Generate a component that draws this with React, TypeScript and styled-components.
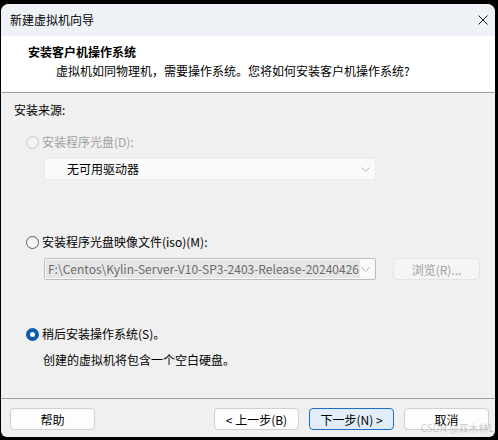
import React from 'react'
import styled, { createGlobalStyle, css } from 'styled-components'

const GlobalStyle = createGlobalStyle`
  html, body {
    margin: 0;
    padding: 0;
    background: #000;
  }
  body {
    width: 498px;
    height: 440px;
    overflow: hidden;
    font-family: "Noto Sans CJK SC", "Noto Sans", sans-serif;
  }
`

const Window = styled.div`
  position: relative;
  margin: 4px 3px 0 1px;
  width: 494px;
  height: 433px;
  display: flex;
  flex-direction: column;
  background: #f0f0f0;
  border-radius: 8px 8px 6px 6px;
  overflow: hidden;
  font-size: 12px;
  color: #000;
`

const TitleBar = styled.div`
  height: 32px;
  flex: none;
  display: flex;
  align-items: center;
  justify-content: space-between;
  padding-left: 9px;
  background: #eef2f7;
  line-height: 20px;
`

const CloseBox = styled.div`
  width: 24px;
  height: 32px;
  display: flex;
  align-items: center;
  justify-content: center;
`

const Header = styled.div`
  height: 56px;
  flex: none;
  box-sizing: border-box;
  padding: 6px 0 0 27px;
  background: #fff;
`

const HeaderTitle = styled.div`
  font-weight: 700;
  line-height: 20px;
`

const HeaderSub = styled.div`
  padding-left: 28px;
  line-height: 18px;
`

const Separator = styled.div`
  height: 1px;
  flex: none;
  background: #a0a0a0;
`

const Body = styled.div`
  flex: 1;
  padding: 7px 0 0 13px;
`

const Line = styled.div<{ $top?: number; $indent?: number }>`
  margin-top: ${p => p.$top ?? 0}px;
  margin-left: ${p => p.$indent ?? 0}px;
  line-height: 20px;
  height: 20px;
`

const RadioRow = styled.label<{ $top: number; $disabled?: boolean }>`
  display: flex;
  align-items: center;
  gap: 3px;
  height: 20px;
  margin: ${p => p.$top}px 0 0 12px;
  line-height: 20px;
  color: ${p => (p.$disabled ? '#a0a0a0' : '#000')};
`

const RadioDot = styled.span<{ $checked?: boolean; $disabled?: boolean }>`
  flex: none;
  width: 13px;
  height: 13px;
  box-sizing: border-box;
  border-radius: 50%;
  ${p =>
    p.$checked
      ? css`
          border: 4px solid #0b5cad;
          background: #fff;
        `
      : p.$disabled
        ? css`
            border: 1px solid #c8c8c8;
            background: #f3f3f3;
          `
        : css`
            border: 1px solid #5c5c5c;
            background: #f7f7f7;
          `}
`

const FieldRow = styled.div<{ $top: number }>`
  display: flex;
  align-items: center;
  gap: 17px;
  margin: ${p => p.$top}px 0 0 30px;
`

const Combo = styled.div<{ $dark?: boolean }>`
  width: 332px;
  height: 22px;
  box-sizing: border-box;
  display: flex;
  align-items: center;
  justify-content: space-between;
  padding: 0 5px 0 1px;
  background: #fafafa;
  border: 1px solid ${p => (p.$dark ? '#bdbdbd' : '#ececec')};
  border-radius: 2px;
`

const ComboText = styled.span<{ $selected?: boolean }>`
  line-height: 18px;
  white-space: nowrap;
  overflow: hidden;
  ${p =>
    p.$selected
      ? css`
          padding: 0 0 0 2px;
          width: 312px;
          background: #e6e6e6;
          color: #6a6a6a;
        `
      : css`
          padding-left: 21px;
          color: #000;
        `}
`

const BrowseButton = styled.div`
  width: 87px;
  height: 22px;
  box-sizing: border-box;
  display: flex;
  align-items: center;
  justify-content: center;
  background: #f5f5f5;
  border: 1px solid #e3e3e3;
  border-radius: 4px;
  color: #a0a0a0;
`

const Footer = styled.div`
  height: 38px;
  flex: none;
  box-sizing: border-box;
  display: flex;
  padding: 9px 0 0 9px;
`

const Button = styled.div<{ $primary?: boolean; $gap?: number }>`
  width: 85px;
  height: 22px;
  box-sizing: border-box;
  margin-left: ${p => p.$gap ?? 0}px;
  display: flex;
  align-items: center;
  justify-content: center;
  border-radius: 4px;
  background: ${p => (p.$primary ? '#e1eefa' : '#fdfdfd')};
  border: 1px solid ${p => (p.$primary ? '#1a70c8' : '#d0d0d0')};
`

const Watermark = styled.div`
  position: absolute;
  right: 1px;
  bottom: 2px;
  font-size: 10px;
  line-height: 14px;
  white-space: nowrap;
  color: rgba(140, 140, 140, 0.45);
  pointer-events: none;
`

const Chevron = () => (
  <svg width="9" height="5" viewBox="0 0 9 5">
    <path d="M0.5 0.5 L4.5 4.5 L8.5 0.5" fill="none" stroke="#b4b4b4" strokeWidth="1" />
  </svg>
)

const CloseIcon = () => (
  <svg width="10" height="10" viewBox="0 0 10 10">
    <path d="M0.5 0.5 L9.5 9.5 M9.5 0.5 L0.5 9.5" stroke="#1a1a1a" strokeWidth="1" />
  </svg>
)

export default function App() {
  return (
    <>
      <GlobalStyle />
      <Window>
        <TitleBar>
          <span>新建虚拟机向导</span>
          <CloseBox>
            <CloseIcon />
          </CloseBox>
        </TitleBar>
        <Header>
          <HeaderTitle>安装客户机操作系统</HeaderTitle>
          <HeaderSub>虚拟机如同物理机，需要操作系统。您将如何安装客户机操作系统?</HeaderSub>
        </Header>
        <Separator />
        <Body>
          <Line>安装来源:</Line>
          <RadioRow $top={12} $disabled>
            <RadioDot $disabled />
            安装程序光盘(D):
          </RadioRow>
          <FieldRow $top={6}>
            <Combo>
              <ComboText>无可用驱动器</ComboText>
              <Chevron />
            </Combo>
          </FieldRow>
          <RadioRow $top={52}>
            <RadioDot />
            安装程序光盘映像文件(iso)(M):
          </RadioRow>
          <FieldRow $top={6}>
            <Combo $dark>
              <ComboText $selected>F:\Centos\Kylin-Server-V10-SP3-2403-Release-20240426</ComboText>
              <Chevron />
            </Combo>
            <BrowseButton>浏览(R)...</BrowseButton>
          </FieldRow>
          <RadioRow $top={44}>
            <RadioDot $checked />
            稍后安装操作系统(S)。
          </RadioRow>
          <Line $top={6} $indent={29}>创建的虚拟机将包含一个空白硬盘。</Line>
        </Body>
        <Separator />
        <Footer>
          <Button>帮助</Button>
          <Button $gap={119}>&lt; 上一步(B)</Button>
          <Button $gap={10} $primary>下一步(N) &gt;</Button>
          <Button $gap={10}>取消</Button>
        </Footer>
        <Watermark>CSDN @双木林L</Watermark>
      </Window>
    </>
  )
}
